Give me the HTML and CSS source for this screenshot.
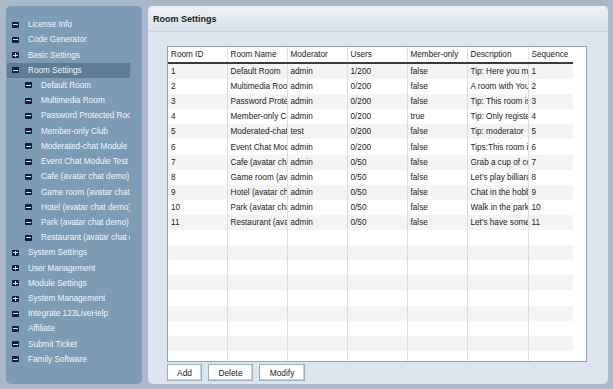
FILE: index.html
```html
<!DOCTYPE html>
<html lang="en">
<head>
<meta charset="UTF-8" />
<title>Room Settings</title>
<link rel="stylesheet" href="styles.css">
</head>
<body>
<div class="page">
  <nav class="sidebar">
    <ul class="tree">
      <li class="top"><span class="ico minus"></span><span class="label">License Info</span></li>
      <li class="top"><span class="ico minus"></span><span class="label">Code Generator</span></li>
      <li class="top"><span class="ico plus"></span><span class="label">Basic Settings</span></li>
      <li class="top active"><span class="ico minus"></span><span class="label">Room Settings</span></li>
      <li class="sub"><span class="ico minus"></span><span class="label">Default Room</span></li>
      <li class="sub"><span class="ico minus"></span><span class="label">Multimedia Room</span></li>
      <li class="sub"><span class="ico minus"></span><span class="label">Password Protected Room</span></li>
      <li class="sub"><span class="ico minus"></span><span class="label">Member-only Club</span></li>
      <li class="sub"><span class="ico minus"></span><span class="label">Moderated-chat Module</span></li>
      <li class="sub"><span class="ico minus"></span><span class="label">Event Chat Module Test</span></li>
      <li class="sub"><span class="ico minus"></span><span class="label">Cafe (avatar chat demo)</span></li>
      <li class="sub"><span class="ico minus"></span><span class="label">Game room (avatar chat demo)</span></li>
      <li class="sub"><span class="ico minus"></span><span class="label">Hotel (avatar chat demo)</span></li>
      <li class="sub"><span class="ico minus"></span><span class="label">Park (avatar chat demo)</span></li>
      <li class="sub"><span class="ico minus"></span><span class="label">Restaurant (avatar chat demo)</span></li>
      <li class="top"><span class="ico plus"></span><span class="label">System Settings</span></li>
      <li class="top"><span class="ico plus"></span><span class="label">User Management</span></li>
      <li class="top"><span class="ico plus"></span><span class="label">Module Settings</span></li>
      <li class="top"><span class="ico plus"></span><span class="label">System Management</span></li>
      <li class="top"><span class="ico minus"></span><span class="label">Integrate 123LiveHelp</span></li>
      <li class="top"><span class="ico minus"></span><span class="label">Affiliate</span></li>
      <li class="top"><span class="ico minus"></span><span class="label">Submit Ticket</span></li>
      <li class="top"><span class="ico minus"></span><span class="label">Family Software</span></li>
    </ul>
  </nav>

  <main class="panel">
    <div class="panel-head">Room Settings</div>
    <div class="panel-body">
      <div class="grid-box">
        <table class="grid">
          <colgroup>
            <col class="c1"><col class="c2"><col class="c3"><col class="c4"><col class="c5"><col class="c6"><col class="c7">
          </colgroup>
          <thead>
            <tr><th>Room ID</th><th>Room Name</th><th>Moderator</th><th>Users</th><th>Member-only</th><th>Description</th><th>Sequence</th></tr>
          </thead>
          <tbody>
            <tr><td>1</td><td>Default Room</td><td>admin</td><td>1/200</td><td>false</td><td>Tip: Here you may chat</td><td>1</td></tr>
            <tr><td>2</td><td>Multimedia Room</td><td>admin</td><td>0/200</td><td>false</td><td>A room with YouTube</td><td>2</td></tr>
            <tr><td>3</td><td>Password Protected</td><td>admin</td><td>0/200</td><td>false</td><td>Tip: This room is</td><td>3</td></tr>
            <tr><td>4</td><td>Member-only Club</td><td>admin</td><td>0/200</td><td>true</td><td>Tip: Only registered</td><td>4</td></tr>
            <tr><td>5</td><td>Moderated-chat</td><td>test</td><td>0/200</td><td>false</td><td>Tip: moderator</td><td>5</td></tr>
            <tr><td>6</td><td>Event Chat Module</td><td>admin</td><td>0/200</td><td>false</td><td>Tips:This room is</td><td>6</td></tr>
            <tr><td>7</td><td>Cafe (avatar chat)</td><td>admin</td><td>0/50</td><td>false</td><td>Grab a cup of coffee</td><td>7</td></tr>
            <tr><td>8</td><td>Game room (avatar)</td><td>admin</td><td>0/50</td><td>false</td><td>Let's play billiards</td><td>8</td></tr>
            <tr><td>9</td><td>Hotel (avatar chat)</td><td>admin</td><td>0/50</td><td>false</td><td>Chat in the hobby</td><td>9</td></tr>
            <tr><td>10</td><td>Park (avatar chat)</td><td>admin</td><td>0/50</td><td>false</td><td>Walk in the park</td><td>10</td></tr>
            <tr><td>11</td><td>Restaurant (avatar)</td><td>admin</td><td>0/50</td><td>false</td><td>Let's have some</td><td>11</td></tr>
            <tr><td></td><td></td><td></td><td></td><td></td><td></td><td></td></tr>
            <tr><td></td><td></td><td></td><td></td><td></td><td></td><td></td></tr>
            <tr><td></td><td></td><td></td><td></td><td></td><td></td><td></td></tr>
            <tr><td></td><td></td><td></td><td></td><td></td><td></td><td></td></tr>
            <tr><td></td><td></td><td></td><td></td><td></td><td></td><td></td></tr>
            <tr><td></td><td></td><td></td><td></td><td></td><td></td><td></td></tr>
            <tr><td></td><td></td><td></td><td></td><td></td><td></td><td></td></tr>
            <tr><td></td><td></td><td></td><td></td><td></td><td></td><td></td></tr>
            <tr><td></td><td></td><td></td><td></td><td></td><td></td><td></td></tr>
          </tbody>
        </table>
      </div>
      <div class="actions">
        <button class="btn btn-add">Add</button>
        <button class="btn btn-delete">Delete</button>
        <button class="btn btn-modify">Modify</button>
      </div>
    </div>
  </main>
</div>
</body>
</html>
```

FILE: styles.css
```css
body {
  margin: 0;
  background: #a9b9ca;
  font-family: 'Liberation Sans', Arial, sans-serif;
  color: #222;
}
.page {
  display: flex;
  gap: 6px;
  padding: 6px 5px 5px 6px;
  height: 389px;
  box-sizing: border-box;
}
.sidebar {
  width: 136px;
  flex: none;
  background: #7c9bb5;
  border-radius: 5px;
  padding-top: 11px;
  box-sizing: border-box;
  overflow: hidden;
}
.tree {
  list-style: none;
  margin: 0;
  padding: 0;
}
.tree li {
  box-sizing: border-box;
  height: 15.23px;
  font-size: 8.2px;
  color: #f2f6fa;
  white-space: nowrap;
  overflow: hidden;
  margin-left: 1px;
  width: 123px;
  display: flex;
  align-items: center;
}
.tree li.top {
  padding-left: 5px;
}
.tree li.sub {
  padding-left: 18px;
}
.tree li.active {
  background: #5e7c97;
}
.label {
  overflow: hidden;
  min-width: 0;
}
.ico {
  width: 7px;
  height: 6px;
  background: #0c1c48;
  border-radius: 1px;
  position: relative;
  margin-right: 9px;
  flex: none;
}
.ico::before {
  content: "";
  position: absolute;
  left: 1px;
  top: 2.5px;
  width: 5px;
  height: 1px;
  background: #d8e2ee;
}
.ico.plus::after {
  content: "";
  position: absolute;
  left: 3px;
  top: 1px;
  width: 1px;
  height: 4px;
  background: #d8e2ee;
}

.panel {
  flex: 1;
  background: #dce4ed;
  border-radius: 5px;
  display: flex;
  flex-direction: column;
  overflow: hidden;
}
.panel-head {
  height: 25px;
  line-height: 26px;
  padding-left: 5px;
  font-size: 9px;
  font-weight: bold;
  color: #1a1a1a;
  background: linear-gradient(#eef2f6, #d8e1ea);
  border-bottom: 1px solid #c7d3df;
  flex: none;
}
.panel-body {
  padding: 14px 21px 0 19px;
}
.grid-box {
  height: 316px;
  background: #fff;
  border: 1px solid #8ba3ba;
  box-sizing: border-box;
  overflow: hidden;
}
.grid {
  border-collapse: collapse;
  table-layout: fixed;
  width: 405px;
  font-size: 8.2px;
}
.grid col.c1 { width: 59px; }
.grid col.c2 { width: 60px; }
.grid col.c3 { width: 60px; }
.grid col.c4 { width: 60px; }
.grid col.c5 { width: 60px; }
.grid col.c6 { width: 61px; }
.grid col.c7 { width: 45px; }
.grid th {
  height: 15px;
  font-weight: normal;
  text-align: left;
  padding: 0 0 0 3px;
  border-bottom: 2px solid #3a3a3a;
  border-right: 1px solid #dde4ec;
  white-space: nowrap;
  overflow: hidden;
  background: #fff;
}
.grid td {
  height: 15.1px;
  padding: 0 0 0 3px;
  border-right: 1px solid #d6dee8;
  white-space: nowrap;
  overflow: hidden;
  text-overflow: clip;
}
.grid th:last-child, .grid td:last-child {
  border-right: none;
}
.grid tbody tr:nth-child(odd) td {
  background: #f4f4f4;
}
.actions {
  display: flex;
  gap: 6px;
  padding-top: 2px;
}
.btn {
  height: 17px;
  font-family: 'Liberation Sans', Arial, sans-serif;
  font-size: 8.4px;
  color: #222;
  background: #fff;
  border: 1px solid #9aaec2;
  box-shadow: inset -1px -1px 0 #c8d3df;
  padding: 0;
}
.btn-add { width: 35px; }
.btn-delete { width: 45px; }
.btn-modify { width: 46px; }
```
